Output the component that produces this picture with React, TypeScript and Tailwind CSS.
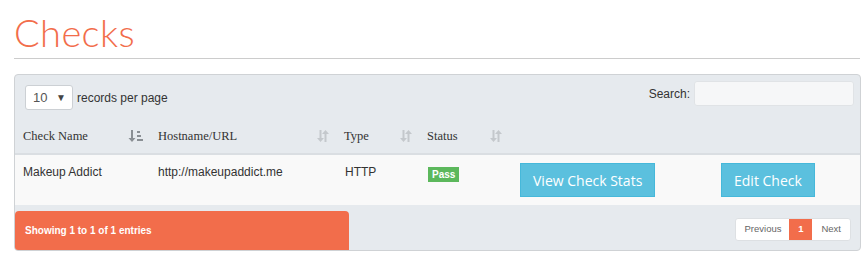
import React from 'react';

const SortIcon = ({ active }: { active?: boolean }) =>
  active ? (
    <svg width="15" height="12" viewBox="0 0 15 12" className="text-[#8a8f94]">
      <path d="M3 0h2v8h2.5L4 12 0.5 8H3z" fill="currentColor" />
      <rect x="9" y="1" width="3" height="2" fill="currentColor" />
      <rect x="9" y="5" width="4" height="2" fill="currentColor" />
      <rect x="9" y="9" width="6" height="2" fill="currentColor" />
    </svg>
  ) : (
    <svg width="12" height="12" viewBox="0 0 12 12" className="text-[#c4c8cc]">
      <path d="M2.5 0h2v8H7L3.5 12 0 8h2.5z" fill="currentColor" />
      <path d="M7.5 12h2V4H12L8.5 0 5 4h2.5z" fill="currentColor" />
    </svg>
  );

const headers = [
  { label: 'Check Name', w: 'w-[135px]', active: true },
  { label: 'Hostname/URL', w: 'w-[186px]' },
  { label: 'Type', w: 'w-[83px]' },
  { label: 'Status', w: 'w-[90px]' },
];

export default function App() {
  return (
    <div className="w-[866px] h-[266px] bg-white px-[14px] pt-[10px] font-['Liberation_Sans',Arial,sans-serif] text-[#333]">
      <h1 className="font-['Lato',sans-serif] font-light text-[38px] leading-[44px] text-[#f26d4b] tracking-[0.4px]">
        Checks
      </h1>
      <div className="mt-[4px] border-b border-[#cccccc] w-[846px]" />

      <div className="mt-[15px] w-[847px] h-[177px] border border-[#cfd2d5] rounded-[4px] bg-[#e6eaee] flex flex-col overflow-hidden">
        {/* top controls */}
        <div className="flex justify-between items-start h-[44px]">
          <div className="flex items-center ml-[10px] mt-[10px]">
            <div className="w-[48px] h-[25px] bg-white border border-[#ccd0d4] rounded-[3px] flex items-center justify-between pl-[7px] pr-[6px] text-[13px] text-[#555]">
              <span>10</span>
              <span className="text-[10px] text-[#444]">▼</span>
            </div>
            <span className="ml-[4px] text-[12px] text-[#333]">records per page</span>
          </div>
          <div className="flex items-center mt-[6px] mr-[6px]">
            <span className="text-[12px] text-[#333] mr-[4px]">Search:</span>
            <div className="w-[160px] h-[25px] bg-[#f6f7f8] border border-[#e0e3e6] rounded-[3px]" />
          </div>
        </div>

        {/* header row */}
        <div className="flex h-[36px] items-center border-b-2 border-[#dadee2] font-['Liberation_Serif',serif] text-[12.5px] text-[#333]">
          {headers.map((h) => (
            <div key={h.label} className={`${h.w} flex items-center justify-between pl-[8px] pr-[7px]`}>
              <span>{h.label}</span>
              <SortIcon active={h.active} />
            </div>
          ))}
        </div>

        {/* body row */}
        <div className="flex h-[50px] bg-[#f9f9f9] text-[12px] text-[#333]">
          <div className="w-[135px] pl-[8px] pt-[8px]">Makeup Addict</div>
          <div className="w-[186px] pl-[8px] pt-[8px]">http://makeupaddict.me</div>
          <div className="w-[83px] pl-[9px] pt-[8px]">HTTP</div>
          <div className="w-[90px] pl-[9px] pt-[10px]">
            <span className="inline-block bg-[#5cb85c] text-white font-bold text-[10px] leading-[15px] px-[4px]">
              Pass
            </span>
          </div>
          <div className="w-[201px] pl-[11px] pt-[8px]">
            <button className="h-[34px] px-[12px] bg-[#5bc0de] border border-[#46b8da] text-white text-[14px] font-['Open_Sans',sans-serif]">
              View Check Stats
            </button>
          </div>
          <div className="pl-[11px] pt-[8px]">
            <button className="h-[34px] px-[12px] bg-[#5bc0de] border border-[#46b8da] text-white text-[14px] font-['Open_Sans',sans-serif]">
              Edit Check
            </button>
          </div>
        </div>

        {/* footer */}
        <div className="flex flex-1 justify-between">
          <div className="mt-[6px] w-[334px] bg-[#f26d4b] rounded-t-[4px] flex items-center pl-[10px] text-white font-bold text-[10px]">
            Showing 1 to 1 of 1 entries
          </div>
          <div className="mt-[13px] mr-[9px] h-[23px] flex border border-[#dde0e3] rounded-[3px] bg-white text-[9.5px] text-[#666] overflow-hidden">
            <span className="px-[8px] flex items-center">Previous</span>
            <span className="w-[23px] flex items-center justify-center bg-[#f26d4b] text-white font-bold">1</span>
            <span className="px-[9px] flex items-center">Next</span>
          </div>
        </div>
      </div>
    </div>
  );
}
